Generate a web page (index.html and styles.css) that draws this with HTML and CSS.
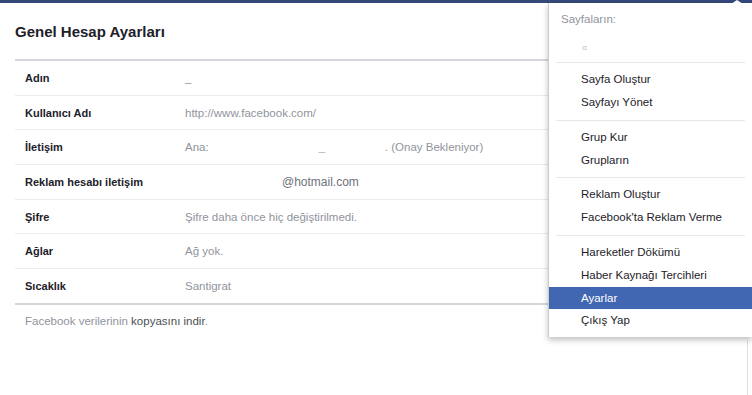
FILE: index.html
```html
<!DOCTYPE html>
<html lang="tr">
<head>
    <meta charset="UTF-8">
    <title>Genel Hesap Ayarları</title>
    <link rel="stylesheet" href="styles.css">
</head>
<body>
    <div class="topbar"><span class="notch"></span></div>

    <div class="page">
        <div class="settings">
            <h2 class="title">Genel Hesap Ayarları</h2>
            <div class="table">
                <div class="row"><span class="label">Adın</span><span class="value">_</span></div>
                <div class="row"><span class="label">Kullanıcı Adı</span><span class="value">http://www.facebook.com/</span></div>
                <div class="row"><span class="label">İletişim</span><span class="value">Ana: <span class="hidden-mail">_</span>. (Onay Bekleniyor)</span></div>
                <div class="row"><span class="label">Reklam hesabı iletişim</span><span class="value mail">@hotmail.com</span></div>
                <div class="row"><span class="label">Şifre</span><span class="value">Şifre daha önce hiç değiştirilmedi.</span></div>
                <div class="row"><span class="label">Ağlar</span><span class="value">Ağ yok.</span></div>
                <div class="row"><span class="label">Sıcaklık</span><span class="value">Santigrat</span></div>
            </div>
            <p class="footer">Facebook verilerinin <a href="#">kopyasını indir</a>.</p>
        </div>
        <div class="edge"></div>
    </div>

    <!-- account dropdown -->
    <div class="menu">
        <div class="menu-head">Sayfaların:</div>
        <div class="menu-page">¤</div>
        <div class="group">
            <div class="item">Sayfa Oluştur</div>
            <div class="item">Sayfayı Yönet</div>
        </div>
        <div class="group">
            <div class="item">Grup Kur</div>
            <div class="item">Grupların</div>
        </div>
        <div class="group">
            <div class="item">Reklam Oluştur</div>
            <div class="item">Facebook'ta Reklam Verme</div>
        </div>
        <div class="group last">
            <div class="item">Hareketler Dökümü</div>
            <div class="item">Haber Kaynağı Tercihleri</div>
            <div class="item active">Ayarlar</div>
            <div class="item">Çıkış Yap</div>
        </div>
    </div>
</body>
</html>
```

FILE: styles.css
```css
* {
    margin: 0;
    padding: 0;
    box-sizing: border-box;
}

body {
    width: 752px;
    height: 395px;
    overflow: hidden;
    background: #fff;
    font-family: "Liberation Sans", Arial, sans-serif;
    font-size: 11.5px;
    color: #1d2129;
    position: relative;
}

.topbar {
    height: 3px;
    background: #34497a;
    position: relative;
}

.topbar .notch {
    position: absolute;
    left: 731px;
    top: 0;
    width: 0;
    height: 0;
    border-left: 6px solid transparent;
    border-right: 6px solid transparent;
    border-bottom: 4px solid #fff;
}

.page {
    display: flex;
    height: 392px;
}

.settings {
    width: 733px;
    padding-left: 15px;
}

.edge {
    margin-left: 14px;
    margin-top: 337px;
    width: 1px;
    background: #dddfe2;
}

.title {
    font-size: 15px;
    font-weight: bold;
    line-height: 20px;
    padding: 19px 0 17px;
    color: #1d2129;
}

.table {
    border-top: 2px solid #d3d6db;
    border-bottom: 2px solid #d3d6db;
}

.row {
    display: flex;
    align-items: center;
    height: 34.7px;
    padding-left: 10px;
    border-top: 1px solid #e9ebee;
}

.row:first-child {
    border-top: none;
    height: 33.7px;
}

.label {
    width: 160px;
    font-size: 11px;
    font-weight: bold;
    color: #1d2129;
}

.value {
    color: #90949c;
}

.value.mail {
    margin-left: 97px;
    font-size: 12px;
    color: #6e727a;
}

.hidden-mail {
    display: inline-block;
    width: 173px;
    padding-left: 107px;
    color: #b0b3b8;
}

.footer {
    padding: 10px 10px;
    color: #90949c;
}

.footer a {
    color: #4b4f56;
    text-decoration: none;
}

.menu {
    position: absolute;
    left: 548px;
    top: 3px;
    width: 204px;
    background: #fff;
    border-left: 1px solid #c9ccd1;
    box-shadow: 0 3px 6px rgba(0, 0, 0, 0.25);
    padding-bottom: 5px;
}

.menu-head {
    color: #90949c;
    padding: 8px 12px 0;
    line-height: 16px;
}

.menu-page {
    color: #c4c6ca;
    font-size: 9px;
    padding: 16px 0 9px 33px;
}

.group {
    margin: 0 7px;
    border-top: 1px solid #e5e7ea;
    padding: 5px 0 5.5px;
}

.group.last {
    padding-bottom: 0;
}

.item {
    line-height: 23px;
    padding-left: 25px;
    color: #1d2129;
}

.item.active {
    margin: 0 -7px;
    padding-left: 32px;
    background: #4267b2;
    color: #fff;
    height: 22px;
    line-height: 22px;
}
```
